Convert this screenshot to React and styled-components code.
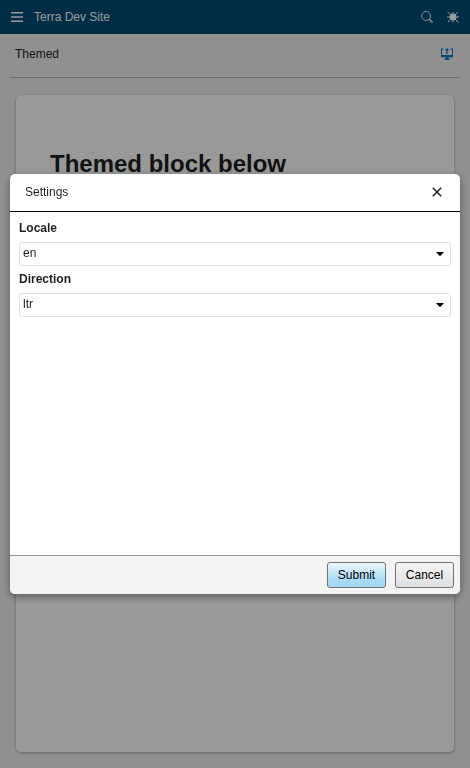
import React from 'react';
import styled, { createGlobalStyle } from 'styled-components';

const GlobalStyle = createGlobalStyle`
  *, *::before, *::after { box-sizing: border-box; }
  html, body, #root { height: 100%; }
  body {
    margin: 0;
    color: #1c1f21;
    font-family: "Liberation Sans", Arial, sans-serif;
    font-size: 12px;
    line-height: 16px;
  }
`;

const Page = styled.div`
  display: flex;
  flex-direction: column;
  min-height: 100%;
  background: #f1f1f1;
`;

const SiteHeader = styled.header`
  display: flex;
  align-items: center;
  height: 34px;
  padding: 0 9px;
  background: #004c76;
  color: #fff;
`;

const SiteTitle = styled.span`
  flex: 1;
  padding-left: 9px;
`;

const IconButton = styled.button`
  display: flex;
  align-items: center;
  justify-content: center;
  width: ${({ $size }) => $size || 16}px;
  height: ${({ $size }) => $size || 16}px;
  margin-left: ${({ $gap }) => $gap || 0}px;
  padding: 0;
  border: 0;
  background: transparent;
  color: inherit;
  cursor: pointer;
`;

const SubHeader = styled.div`
  display: flex;
  align-items: center;
  justify-content: space-between;
  height: 44px;
  margin: 0 10px;
  padding: 0 5px 4px;
  border-bottom: 1px solid #b8b8b8;
  color: #1c1f21;
`;

const ThemeButton = styled(IconButton)`
  color: #007cc3;
`;

const Card = styled.main`
  flex: 1;
  margin: 17px 16px 16px;
  padding: 55px 34px;
  border-radius: 5px;
  background: #fff;
  box-shadow: 0 1px 3px rgba(0, 0, 0, 0.35);
`;

const CardTitle = styled.h1`
  margin: 0;
  font-size: 24px;
  line-height: 28px;
`;

const Overlay = styled.div`
  position: fixed;
  inset: 0;
  display: flex;
  align-items: center;
  justify-content: center;
  padding: 10px;
  background: rgba(0, 0, 0, 0.4);
`;

const Dialog = styled.form`
  display: flex;
  flex-direction: column;
  width: 100%;
  max-width: 640px;
  height: 420px;
  max-height: 100%;
  overflow: hidden;
  border-radius: 5px;
  background: #fff;
  box-shadow: 0 3px 8px rgba(0, 0, 0, 0.4);
`;

const DialogHeader = styled.header`
  display: flex;
  align-items: center;
  justify-content: space-between;
  height: 38px;
  padding: 0 13px 2px 15px;
  border-bottom: 1px solid #000;
`;

const DialogTitle = styled.h2`
  margin: 0;
  font-size: 12px;
  font-weight: 400;
`;

const DialogBody = styled.div`
  flex: 1;
  padding: 8px 9px;
  overflow: auto;
`;

const Field = styled.div`
  display: flex;
  flex-direction: column;
  gap: 6px;
  margin-bottom: 5px;
`;

const FieldLabel = styled.label`
  font-weight: 700;
`;

const SelectFrame = styled.div`
  display: grid;
  align-items: center;

  > * { grid-area: 1 / 1; }
`;

const Select = styled.select`
  width: 100%;
  height: 24px;
  padding: 0 24px 2px 3px;
  appearance: none;
  border: 1px solid #dedfe0;
  border-radius: 3px;
  background: #fff;
  color: #1c1f21;
  font: inherit;
`;

const Caret = styled.svg`
  justify-self: end;
  margin-right: 7px;
  pointer-events: none;
`;

const DialogFooter = styled.footer`
  display: flex;
  align-items: center;
  justify-content: flex-end;
  gap: 9px;
  height: 39px;
  padding: 0 6px;
  border-top: 1px solid #909496;
  background: #f3f3f3;
`;

const Button = styled.button`
  min-width: 59px;
  height: 26px;
  padding: 0 9px;
  border: 1px solid #6f7477;
  border-radius: 3px;
  background: ${({ $primary }) =>
    $primary
      ? 'linear-gradient(#ebf6fd, #a5daf5 75%)'
      : 'linear-gradient(#f5f5f5, #dedfe0)'};
  color: #000;
  font: inherit;
  cursor: pointer;
`;

const MenuIcon = () => (
  <svg width="12" height="10" viewBox="0 0 12 10" fill="currentColor">
    <path d="M0 0h12v1.5H0zM0 4.2h12v1.6H0zM0 8.5h12V10H0z" />
  </svg>
);

const SearchIcon = () => (
  <svg width="12" height="12" viewBox="0 0 12 12" fill="none" stroke="currentColor">
    <circle cx="5" cy="5" r="4.5" strokeWidth="0.9" />
    <path d="M8.2 8.2l3.3 3.3" strokeWidth="1.4" />
  </svg>
);

const SettingsIcon = () => (
  <svg width="12" height="12" viewBox="0 0 12 12" fill="currentColor" stroke="currentColor">
    <circle cx="6" cy="6" r="3.5" stroke="none" />
    <path
      d="M6 1v2M6 9v2.4M0 6h3M9 6h3M0.5 0.7l3.5 3.3M8 8l3.5 3.5M11 1L8 4M4 8L1 11"
      strokeWidth="1"
      fill="none"
    />
  </svg>
);

const ThemeIcon = () => (
  <svg width="12" height="12" viewBox="0 0 12 12" fill="currentColor">
    <path d="M0 0.5h2.6v1H1V7h10V1.5H9.4v-1H12v8.8H7.3v1.2h1.2V12h-5v-1.5h1.2V9.3H0z" />
    <path d="M6 0l2.2 2.5H6.6V6H5.4V2.5H3.8z" />
  </svg>
);

const CloseIcon = () => (
  <svg width="10" height="10" viewBox="0 0 10 10" fill="none" stroke="currentColor" strokeWidth="1.5">
    <path d="M0.8 0.8l8.4 8.4M9.2 0.8L0.8 9.2" />
  </svg>
);

const SelectField = ({ id, label, options }) => (
  <Field>
    <FieldLabel htmlFor={id}>{label}</FieldLabel>
    <SelectFrame>
      <Select id={id} name={id} defaultValue={options[0]}>
        {options.map((option) => (
          <option key={option} value={option}>{option}</option>
        ))}
      </Select>
      <Caret width="8" height="4" viewBox="0 0 8 4" aria-hidden="true">
        <path d="M0 0h8L4.6 3.8H3.4z" />
      </Caret>
    </SelectFrame>
  </Field>
);

export default function App() {
  return (
    <>
      <GlobalStyle />
      <Page>
        <SiteHeader>
          <IconButton type="button" aria-label="Menu"><MenuIcon /></IconButton>
          <SiteTitle>Terra Dev Site</SiteTitle>
          <IconButton type="button" aria-label="Search"><SearchIcon /></IconButton>
          <IconButton type="button" aria-label="Site settings" $gap={10}><SettingsIcon /></IconButton>
        </SiteHeader>
        <SubHeader>
          <span>Themed</span>
          <ThemeButton type="button" aria-label="Display options"><ThemeIcon /></ThemeButton>
        </SubHeader>
        <Card>
          <CardTitle>Themed block below</CardTitle>
        </Card>
      </Page>
      <Overlay>
        <Dialog
          role="dialog"
          aria-modal="true"
          aria-labelledby="settings-title"
          onSubmit={(event) => event.preventDefault()}
        >
          <DialogHeader>
            <DialogTitle id="settings-title">Settings</DialogTitle>
            <IconButton type="button" aria-label="Close" $size={20}><CloseIcon /></IconButton>
          </DialogHeader>
          <DialogBody>
            <SelectField id="locale" label="Locale" options={['en', 'de', 'es', 'fr', 'nl', 'pt', 'sv']} />
            <SelectField id="direction" label="Direction" options={['ltr', 'rtl']} />
          </DialogBody>
          <DialogFooter>
            <Button type="submit" $primary>Submit</Button>
            <Button type="button">Cancel</Button>
          </DialogFooter>
        </Dialog>
      </Overlay>
    </>
  );
}
